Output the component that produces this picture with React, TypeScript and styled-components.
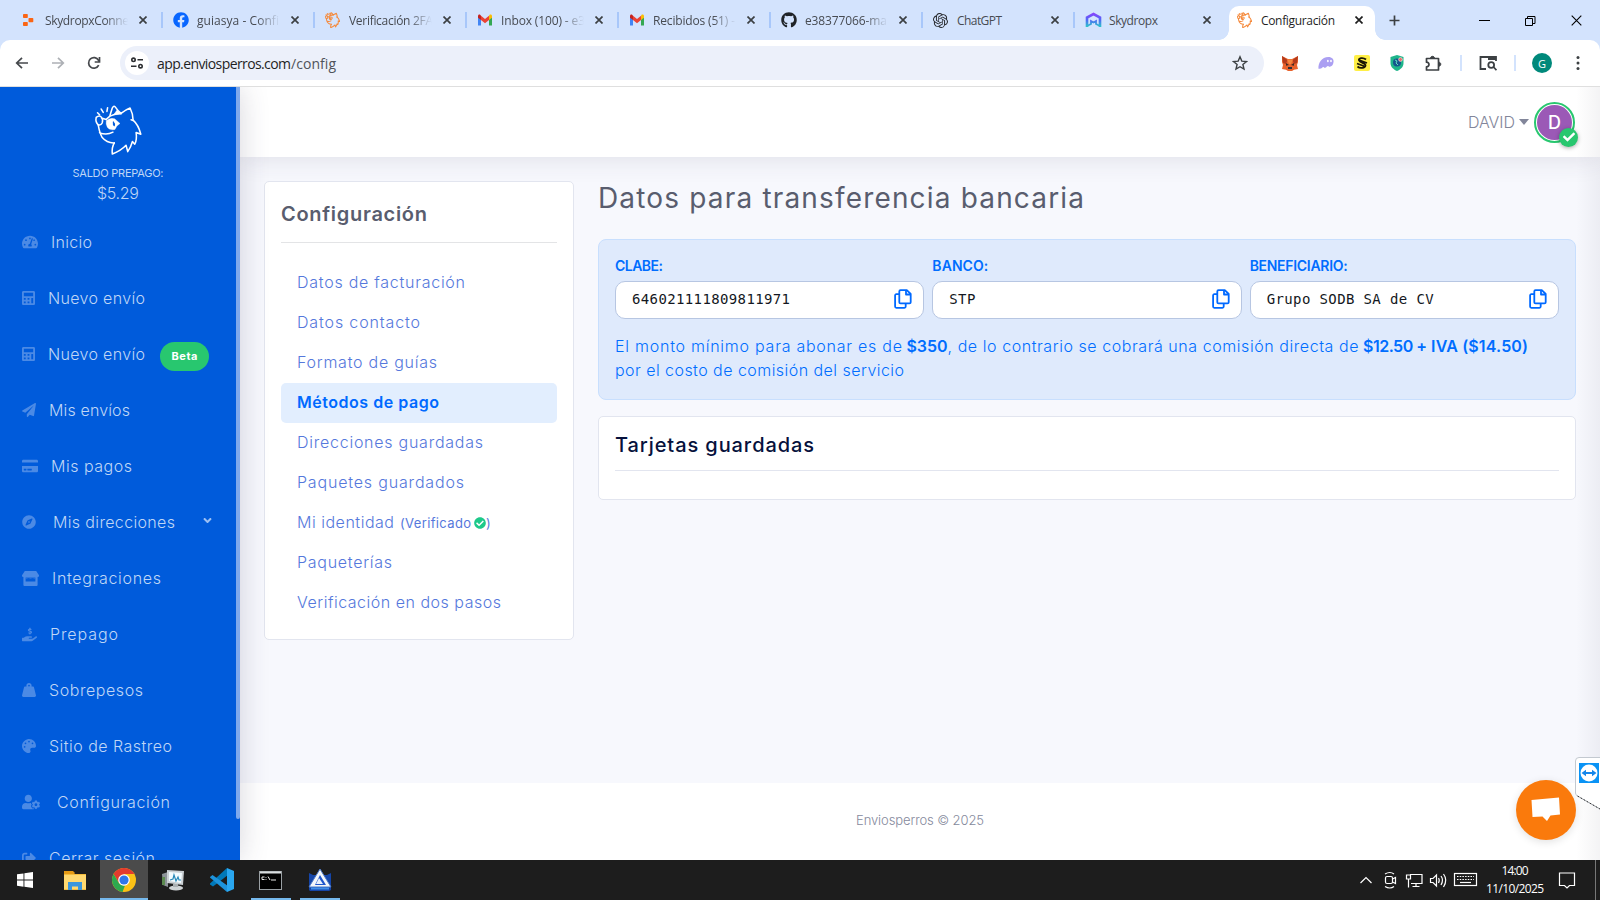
import React, { useLayoutEffect, useRef } from "react";
import styled, { createGlobalStyle, css } from "styled-components";
import {
  FaTachometerAlt, FaCalculator, FaPaperPlane, FaCreditCard, FaCompass,
  FaHandHoldingUsd, FaWeightHanging, FaPalette, FaUserCog, FaSignOutAlt, FaAngleDown,
  FaCheckCircle, FaCheck, FaFacebook, FaGithub,
} from "react-icons/fa";
import { SiOpenai } from "react-icons/si";

const GlobalStyle = createGlobalStyle`
  * { box-sizing: border-box; }
  html, body { margin: 0; padding: 0; overflow: hidden; }
  body { font-family: Inter, "Liberation Sans", sans-serif; font-weight: 300; }
  svg { display: block; flex: none; }
`;

const uiFont = `"Open Sans", "Noto Sans", sans-serif`;

/* Text tracked so that it takes up a set width */
const Run = styled.span`
  display: inline-block;
  white-space: nowrap;
`;
function Fit({ w, children }: { w: number; children: string }) {
  const ref = useRef<HTMLSpanElement>(null);
  useLayoutEffect(() => {
    const el = ref.current!;
    el.style.letterSpacing = "0px";
    const gap = (w - el.getBoundingClientRect().width) / Math.max(1, children.length - 1);
    el.style.letterSpacing = `${gap}px`;
    el.style.marginRight = `${-gap}px`;
  }, [w, children]);
  return <Run ref={ref}>{children}</Run>;
}

const Screen = styled.div`
  width: 1600px;
  height: 900px;
  display: flex;
  flex-direction: column;
  overflow: hidden;
  position: relative;
  background: #fff;
`;

/* ---------- Browser ---------- */
const TabStrip = styled.div`
  height: 40px;
  flex: none;
  display: flex;
  align-items: flex-end;
  padding-left: 10px;
  background: #d3e3fd;
  font-family: ${uiFont};
  font-weight: 400;
`;
const Tab = styled.div<{ $active?: boolean; $last?: boolean }>`
  width: ${(p) => (p.$active ? 146 : 152)}px;
  height: 34px;
  display: flex;
  align-items: center;
  padding: 0 8px 6px 11px;
  position: relative;
  color: ${(p) => (p.$active ? "#1f1f1f" : "#474b52")};
  ${(p) => !p.$active && !p.$last && css`
    &::after { content: ""; position: absolute; right: -1px; top: 6px; width: 2px; height: 16px; background: #a8c7fa; }`}
  ${(p) => p.$active && css`
    margin-left: 3px;
    padding-left: 8px;
    background: #fff;
    border-radius: 10px 10px 0 0;
    &::before, &::after { content: ""; position: absolute; bottom: 0; width: 10px; height: 10px; }
    &::before { left: -10px; background: radial-gradient(circle at 0 0, transparent 9.5px, #fff 10px); }
    &::after { right: -10px; background: radial-gradient(circle at 100% 0, transparent 9.5px, #fff 10px); }`}
`;
const TabIcon = styled.span`
  width: 17px;
  display: flex;
`;
const TabTitle = styled.span<{ $fade?: boolean }>`
  width: 83px;
  margin: 2px 0 0 7px;
  overflow: hidden;
  white-space: nowrap;
  font-size: 12px;
  line-height: 18px;
  ${(p) => p.$fade && css`mask-image: linear-gradient(90deg, #000 72%, transparent 100%);`}
`;
const TabClose = styled.span`
  margin-left: 11px;
`;
const StripButtons = styled.div`
  flex: 1;
  height: 40px;
  display: flex;
  align-items: center;
  justify-content: space-between;
  padding: 0 18px 0 14px;
`;
const WindowControls = styled.div`
  display: flex;
  gap: 35px;
`;
const BarBack = styled.div`
  background: #d3e3fd;
  flex: none;
`;
const Toolbar = styled.div`
  height: 47px;
  display: flex;
  align-items: center;
  background: #fff;
  border-radius: 10px 10px 0 0;
  border-bottom: 1px solid #dfdfdf;
  padding: 0 14px;
  font-family: ${uiFont};
  font-weight: 400;
`;
const NavIcons = styled.div`
  display: flex;
  gap: 20px;
  width: 106px;
`;
const Omnibox = styled.div`
  width: 1144px;
  height: 34px;
  border-radius: 17px;
  background: #ecf0fa;
  display: flex;
  align-items: center;
  padding: 0 16px 0 5px;
  font-size: 14px;
  color: #1f1f1f;
`;
const SiteInfo = styled.span`
  width: 24px;
  height: 24px;
  border-radius: 50%;
  background: #fff;
  display: grid;
  place-items: center;
  margin-right: 8px;
`;
const Path = styled.span`
  flex: 1;
  color: #50545b;
`;
const Extensions = styled.div`
  display: flex;
  align-items: center;
  gap: 20px;
  margin-left: 18px;
`;
const BarRule = styled.span`
  width: 2px;
  height: 16px;
  background: #d3e3fd;
  margin: 0 -3px 0 -3px;
`;
const Profile = styled.span`
  width: 20px;
  height: 20px;
  border-radius: 50%;
  background: #00897b;
  color: #fff;
  font-size: 11px;
  display: grid;
  place-items: center;
  margin: 0 4px 0 -1px;
`;

/* ---------- Page ---------- */
const Page = styled.div`
  flex: 1;
  min-height: 0;
  display: flex;
  position: relative;
  overflow: hidden;
`;
const Sidebar = styled.aside`
  width: 240px;
  flex: none;
  display: flex;
  flex-direction: column;
  align-items: center;
  background: #005bdb;
  color: #bfd6f6;
  position: relative;
  z-index: 2;
  box-shadow: 0 0 28px 0 rgba(55, 50, 80, 0.2);
`;
const SideScroll = styled.span`
  position: absolute;
  right: 0;
  top: 0;
  width: 4px;
  height: 732px;
  border-radius: 0 0 2px 2px;
  background: #7fa9ec;
`;
const LogoBox = styled.div`
  height: 69px;
  flex: none;
  padding: 17px 4px 0 0;
`;
const BalanceLabel = styled.div`
  margin: 7px 4px 0 0;
  height: 20px;
  flex: none;
  line-height: 20px;
  font-size: 11px;
  font-weight: 400;
`;
const Balance = styled.div`
  margin-right: 4px;
  height: 20px;
  flex: none;
  line-height: 20px;
  font-size: 16px;
`;
const Menu = styled.nav`
  width: 100%;
  margin-top: 11px;
`;
const MenuItem = styled.div`
  height: 56px;
  display: flex;
  align-items: center;
  padding-left: 22px;
  font-size: 16px;
  line-height: 24px;
  & > svg { color: #4b8ae5; }
`;
const MenuText = styled.span<{ $gap: number }>`
  margin-left: ${(p) => p.$gap}px;
`;
const Beta = styled.span`
  width: 49px;
  height: 29px;
  margin: 4px 0 0 15px;
  border-radius: 15px;
  background: #28c76f;
  color: #fff;
  font-size: 11px;
  font-weight: 700;
  display: grid;
  place-items: center;
`;
const Caret = styled.span`
  margin: -3px 0 0 26px;
  color: #9cc0f3;
`;
const Content = styled.div`
  flex: 1;
  display: flex;
  flex-direction: column;
  background: #f7f8fd;
`;
const Header = styled.header`
  height: 70px;
  flex: none;
  background: #fff;
  display: flex;
  justify-content: flex-end;
  align-items: center;
  padding-right: 25px;
  box-shadow: 0 0 28px 0 rgba(55, 50, 80, 0.14);
  font-size: 16px;
  color: #82869a;
`;
const DownMark = styled.span`
  border: 5px solid transparent;
  border-top: 6px solid #82869a;
  border-bottom: 0;
  margin: 0 5px 0 4px;
`;
const Avatar = styled.span`
  width: 41px;
  height: 41px;
  border-radius: 50%;
  border: 2px solid #28c76f;
  padding: 1px;
  position: relative;
`;
const AvatarFace = styled.span`
  display: grid;
  place-items: center;
  height: 100%;
  border-radius: 50%;
  background: #9b59b6;
  color: #fff;
  font-size: 18px;
  font-weight: 500;
`;
const AvatarBadge = styled.span`
  position: absolute;
  right: -5px;
  bottom: -6px;
  width: 19px;
  height: 19px;
  border-radius: 50%;
  background: #28c76f;
  color: #fff;
  display: grid;
  place-items: center;
  box-shadow: 0 1px 4px rgba(0, 0, 0, 0.35);
`;
const Columns = styled.main`
  flex: 1;
  display: flex;
  align-items: flex-start;
  gap: 24px;
  padding: 24px 24px 0 24px;
`;
const Card = styled.section`
  background: #fff;
  border: 1px solid #e2e5ef;
  border-radius: 5px;
`;
const SettingsCard = styled(Card)`
  width: 310px;
  height: 459px;
  padding: 16px;
`;
const CardTitle = styled.h3<{ $dark?: boolean }>`
  margin: 0;
  height: ${(p) => (p.$dark ? 38 : 45)}px;
  line-height: ${(p) => (p.$dark ? 25 : 32)}px;
  border-bottom: 1px solid ${(p) => (p.$dark ? "#e2e5ef" : "#e3e4e6")};
  font-size: 20px;
  font-weight: ${(p) => (p.$dark ? 500 : 600)};
  color: ${(p) => (p.$dark ? "#06113c" : "#595d6e")};
`;
const Links = styled.div`
  padding-top: 20px;
`;
const SettingsLink = styled.div<{ $active?: boolean }>`
  height: 40px;
  padding: 0 0 2px 16px;
  display: flex;
  align-items: center;
  border-radius: 5px;
  font-size: 16px;
  color: ${(p) => (p.$active ? "#0069ff" : "#5578dc")};
  font-weight: ${(p) => (p.$active ? 600 : 300)};
  background: ${(p) => (p.$active ? "#e2eefe" : "transparent")};
`;
const Verified = styled.span`
  display: inline-flex;
  align-items: center;
  margin: 2px 0 0 6px;
  font-size: 13px;
  font-weight: 400;
  & > svg { color: #1dc98a; margin-left: 3px; }
`;
const Main = styled.div`
  flex: 1;
  display: flex;
  flex-direction: column;
`;
const PageTitle = styled.h2`
  margin: 0 0 22px;
  height: 36px;
  line-height: 34px;
  font-size: 28px;
  font-weight: 400;
  color: #595d6e;
`;
const TransferBox = styled.section`
  height: 161px;
  padding: 16px;
  background: #dfeafc;
  border: 1px solid #c8dffe;
  border-radius: 8px;
  color: #006dff;
`;
const Fields = styled.div`
  display: grid;
  grid-template-columns: repeat(3, 1fr);
  gap: 8px;
`;
const FieldLabel = styled.div`
  height: 25px;
  line-height: 20px;
  font-size: 14px;
  font-weight: 600;
`;
const FieldBox = styled.div`
  height: 38px;
  display: flex;
  align-items: center;
  justify-content: space-between;
  padding: 0 11px 2px 16px;
  background: #fff;
  border: 1px solid #b7c6e2;
  border-radius: 10px;
  color: #131722;
  font: 400 14px "DejaVu Sans Mono", "Liberation Mono", monospace;
`;
const Notice = styled.p`
  margin: 15px 0 0;
  font-size: 16px;
  line-height: 24px;
  white-space: nowrap;
  b { font-weight: 600; }
`;
const SavedCards = styled(Card)`
  height: 84px;
  margin-top: 16px;
  padding: 16px;
`;
const Footer = styled.footer`
  height: 77px;
  flex: none;
  background: #fff;
  display: grid;
  place-items: center;
  padding-bottom: 3px;
  font-size: 13px;
  color: #85899c;
`;
const EdgeShade = styled.span`
  position: absolute;
  right: 0;
  top: 0;
  bottom: 0;
  width: 24px;
  background: linear-gradient(90deg, rgba(60, 55, 80, 0), rgba(60, 55, 80, 0.06));
`;
const Chat = styled.span`
  position: absolute;
  left: 1516px;
  top: 693px;
  width: 60px;
  height: 60px;
  border-radius: 50%;
  background: #fa7a0c;
  display: grid;
  place-items: center;
  box-shadow: 0 2px 8px rgba(0, 0, 0, 0.12);
`;
const Viewer = styled.span`
  position: absolute;
  left: 1575px;
  top: 670px;
`;

/* ---------- Taskbar ---------- */
const Taskbar = styled.div`
  height: 40px;
  flex: none;
  display: flex;
  justify-content: space-between;
  background: #1d1d1d;
  color: #fff;
  font-family: ${uiFont};
  font-weight: 400;
`;
const Apps = styled.div`
  display: flex;
`;
const AppButton = styled.span<{ $on?: boolean; $line?: number; $w?: number }>`
  width: ${(p) => p.$w ?? 49}px;
  height: 40px;
  display: grid;
  place-items: center;
  position: relative;
  background: ${(p) => (p.$on ? "#4b4b4b" : "transparent")};
  ${(p) => p.$line && css`&::after { content: ""; position: absolute; bottom: 0; left: calc(50% - ${p.$line / 2}px); width: ${p.$line}px; height: 2px; background: #76b9ed; }`}
`;
const Tray = styled.div`
  display: flex;
  align-items: center;
  padding-right: 4px;
`;
const TrayIcons = styled.svg`
  margin-right: -114px;
`;
const Clock = styled.div`
  width: 80px;
  margin-right: 3px;
  font-size: 12px;
  line-height: 18px;
  text-align: center;
`;
const ShowDesktop = styled.span`
  width: 1px;
  height: 40px;
  margin-left: 19px;
  background: #777;
`;

/* ---------- Drawings ---------- */
const Cross = ({ s = 8, w = 1.7, c = "#3c4043" }) => (
  <svg width={s} height={s} viewBox="0 0 8 8" stroke={c} strokeWidth={w} fill="none"><path d="M.5 .5l7 7M7.5 .5l-7 7" /></svg>
);
const Dog = ({ w, h, c, sw, bg }: { w: number; h: number; c: string; sw: number; bg: string }) => (
  <svg width={w} height={h} viewBox="18 18 142 152" fill="none" stroke={c} strokeWidth={sw} strokeLinejoin="round" strokeLinecap="round">
    <path d="M65 52L72 30Q76 22 80 26Q88 38 98 46Q112 35 125 30Q134 48 134 66Q150 80 157 108L143 103Q146 124 139 138L132 130Q127 148 118 160L113 141Q98 157 72 167Q70 147 78 134" />
    <path d="M128 65L134 67M78 134Q56 135 42 118Q34 104 30 80M34 104Q56 112 74 102" />
    <path d="M24 58Q34 49 40 58Q45 64 42 74Q37 83 30 80Q21 72 24 58ZM40 60L54 64L65 54Q82 46 98 47" />
    <path d="M76 50L86 36L98 47Z" fill={c} strokeWidth="1" />
    <path d="M54 68Q66 57 79 62L95 76Q84 82 80 94Q64 98 57 87Q52 78 54 68Z" fill={c} strokeWidth="1" />
    <path d="M75 71Q80 76 78 83Q74 80 75 71Z" fill={bg} stroke={bg} strokeWidth="3" />
    <path d="M28 44L34 50M39 33L45 43M58 29L56 40" />
  </svg>
);
const Store = () => (
  <svg width="17" height="15" viewBox="0 0 17 15" fill="currentColor">
    <path d="M2.800 0h11.400L17 4.200v.6Q17 6 15.800 6H1.200Q0 6 0 4.800v-.6z" />
    <path d="M1.400 6h2.200v4.500h9.800V6h2.200v8q0 1-1 1H2.400q-1 0-1-1z" />
    <path d="M3 6h11v1l-1.500 .8-2-.8-2 .8-2-.8-2 .8-1.500-.8z" opacity=".6" />
  </svg>
);
const Calculator = () => (
  <svg width="13" height="14" viewBox="0 0 448 512" preserveAspectRatio="none"><FaCalculator size="100%" preserveAspectRatio="none" /></svg>
);
const Gmail = () => (
  <svg width="16" height="16" viewBox="0 0 16 16">
    <path d="M1 4v9.500h3V7.200z" fill="#4285f4" /><path d="M15 4v9.500h-3V7.200z" fill="#34a853" />
    <path d="M12 3.800V8l3-2.300V4c0-1.600-1.500-2-2.400-1.200z" fill="#fbbc04" />
    <path d="M1 4v1.700L4 8V3.800L3.400 3C2.300 2 1 2.800 1 4z" fill="#c5221f" /><path d="M4 3.800L8 7l4-3.200V8l-4 3.200L4 8z" fill="#ea4335" />
  </svg>
);
const OrangeBlocks = () => (
  <svg width="16" height="16" viewBox="0 0 16 16" fill="#fb6514"><rect x="2" y="2" width="4.800" height="4" rx=".8" /><rect x="7.500" y="6" width="4.800" height="4.300" rx=".8" /><rect x="2" y="10" width="4.800" height="4" rx=".8" /></svg>
);
const Skydropx = () => (
  <svg width="17" height="16" viewBox="0 0 17 16" fill="none" strokeWidth="2.600">
    <defs><linearGradient id="sk" gradientUnits="userSpaceOnUse" x1="0" y1="1" x2="0" y2="15"><stop offset="0" stopColor="#8a3ffc" /><stop offset=".5" stopColor="#4f6bf5" /><stop offset="1" stopColor="#2bc8c8" /></linearGradient></defs>
    <path d="M2 15V5.500L8.500 2L15 5.500V15" stroke="url(#sk)" /><path d="M2 14l4-2V9l2.500 1.500L11 9v3l4 2" stroke="url(#sk)" strokeWidth="1.800" />
  </svg>
);
const Plus = () => <svg width="11" height="11" viewBox="0 0 11 11" stroke="#3c4043" strokeWidth="1.700"><path d="M5.500 .5v10M.5 5.500h10" /></svg>;
const Arrow = ({ flip, c }: { flip?: boolean; c: string }) => (
  <svg width="16" height="16" viewBox="0 0 16 16" fill="none" stroke={c} strokeWidth="1.700"><path d={flip ? "M2 8h11M8 2.800L13.300 8L8 13.200" : "M14 8H3M8 2.800L2.700 8L8 13.200"} /></svg>
);
const Reload = () => (
  <svg width="16" height="16" viewBox="0 0 16 16" fill="none" stroke="#45484c" strokeWidth="1.700"><path d="M12.700 10.200A5.300 5.300 0 1 1 12.500 5.200L13.600 6.600" /><path d="M13.500 2v5H8.700" /></svg>
);
const Tune = () => (
  <svg width="14" height="12" viewBox="0 0 14 12" fill="none" stroke="#2b2d30" strokeWidth="1.600"><circle cx="3.500" cy="2.800" r="1.700" /><path d="M7.500 2.800H13M1 9.200h5.500" /><circle cx="10.500" cy="9.200" r="1.700" /></svg>
);
const Star = () => <svg width="16" height="16" viewBox="0 0 16 16" fill="none" stroke="#3c4043" strokeWidth="1.400"><path d="M8 1.800l1.800 4.300 4.700.4-3.600 3 1.100 4.600L8 11.700l-4 2.400 1.100-4.600-3.600-3 4.700-.4z" /></svg>;
const Fox = () => (
  <svg width="16" height="16" viewBox="0 0 16 16"><path d="M0 1l6 3h4l6-3v6l-1 3 1 4-4 .8-2 1.200H6l-2-1.200L0 14l1-4-1-3z" fill="#e8622c" /><path d="M0 1l5.500 4L4 9 1 8zM16 1l-5.500 4L12 9l3-1z" fill="#b23a1c" /><path d="M4 8l3 2-3 .8zM12 8L9 10l3 .8z" fill="#3b2a25" /><path d="M6 12h4v2H6z" fill="#2c2f3a" /><path d="M5 4.500h6L9 9H7z" fill="#f58840" /></svg>
);
const Ghost = () => (
  <svg width="16" height="14" viewBox="0 0 17 14"><path d="M.5 13C0 7 4 .5 11 .5c4 0 6 2.500 5.500 5.500-.4 3-2 5-4 5-1.200 0-1.200-.8-2-.8-1 0-1.500 1.800-3 1.800-1.200 0-1.200-.8-2-.8C4.500 11.200 4 13.700.5 13z" fill="#ab9ff2" /><ellipse cx="10.500" cy="4.800" rx=".9" ry="1.300" fill="#fff" /><ellipse cx="13.800" cy="4.800" rx=".9" ry="1.300" fill="#fff" /></svg>
);
const Solflare = () => (
  <svg width="16" height="16" viewBox="0 0 16 16"><rect width="16" height="16" rx="2" fill="#ffef46" /><path d="M12 4.500C9 2 4 3 5 5.500S12 8 11.500 10.500 6 14 3.500 11.500M3 8.500l8 3M5 5l8 3" fill="none" stroke="#1a1605" strokeWidth="1.800" /></svg>
);
const Shield = () => (
  <svg width="14" height="16" viewBox="0 0 14 16"><path d="M7 0l6.500 2v6c0 4-3 6.500-6.500 8C3.500 14.500.5 12 .5 8V2z" fill="#1fb58a" /><circle cx="7" cy="7.500" r="4" fill="#15548c" /><path d="M5 5l2 1-1 2 2 2" stroke="#5fe0c0" fill="none" /><circle cx="10.500" cy="4.500" r="1.900" fill="#e86a6a" stroke="#fff" strokeWidth=".5" /></svg>
);
const Puzzle = () => <svg width="19" height="17" viewBox="-1 0 19 17" fill="none" stroke="#3c4043" strokeWidth="1.700"><path d="M1.500 3.500h12V15H1.500v-3.200c3.300 0 3.300-4.600 0-4.600z" strokeLinejoin="round" /><path d="M5.500 3.200c0-2.500 4-2.500 4 0M13.800 7.200c2.600 0 2.600 4 0 4" fill="#3c4043" strokeWidth="1" /></svg>;
const TabSearch = () => <svg width="18" height="16" viewBox="0 0 18 16" fill="none" stroke="#3c4043" strokeWidth="1.800"><path d="M7 14H1.500V2H17v4" /><path d="M9 3.500h8" strokeWidth="3" /><circle cx="12.200" cy="10" r="2.900" /><path d="M14.500 12l3 3.200" /></svg>;
const Dots = () => <svg width="4" height="16" viewBox="0 0 4 16" fill="#3c4043"><circle cx="2" cy="2.500" r="1.500" /><circle cx="2" cy="8" r="1.500" /><circle cx="2" cy="13.500" r="1.500" /></svg>;
const Copy = () => (
  <svg width="18" height="20" viewBox="0 0 18 20" fill="none" stroke="#0069ff" strokeWidth="1.800" strokeLinejoin="round"><path d="M6.500 1.200h6.300L16.700 5v8.200c0 .7-.5 1.200-1.200 1.200h-9c-.7 0-1.200-.5-1.200-1.200V2.400c0-.7.500-1.200 1.200-1.200z" /><path d="M12 1.500V5.500h4.500M5 5.200H2.300C1.600 5.200 1.100 5.700 1.100 6.400v11.200c0 .7.500 1.200 1.200 1.200h8.200c.7 0 1.200-.5 1.200-1.200V14.500" /></svg>
);

const tabs = [
  { icon: <OrangeBlocks />, title: "SkydropxConne", w: 84, fade: true },
  { icon: <FaFacebook size={16} color="#0866ff" />, title: "guiasya - Confi", w: 82, fade: true },
  { icon: <Dog w={15} h={16} c="#f58a3c" sw={10} bg="#d3e3fd" />, title: "Verificación 2FA", w: 84, fade: true },
  { icon: <Gmail />, title: "Inbox (100) - e3", w: 84, fade: true },
  { icon: <Gmail />, title: "Recibidos (51) -", w: 82, fade: true },
  { icon: <FaGithub size={16} color="#1f2328" />, title: "e38377066-ma", w: 82, fade: true },
  { icon: <SiOpenai size={15} color="#26282c" />, title: "ChatGPT", w: 45 },
  { icon: <Skydropx />, title: "Skydropx", w: 49 },
];

const menu: { Icon: any; s: number; text: string; x: number; w: number }[] = [
  { Icon: FaTachometerAlt, s: 16, text: "Inicio", x: 51, w: 41 },
  { Icon: Calculator, s: 13, text: "Nuevo envío", x: 48, w: 97 },
  { Icon: Calculator, s: 13, text: "Nuevo envío", x: 48, w: 97 },
  { Icon: FaPaperPlane, s: 14, text: "Mis envíos", x: 49, w: 81 },
  { Icon: FaCreditCard, s: 16, text: "Mis pagos", x: 51, w: 81 },
  { Icon: FaCompass, s: 14, text: "Mis direcciones", x: 53, w: 122 },
  { Icon: Store, s: 17, text: "Integraciones", x: 52, w: 109 },
  { Icon: FaHandHoldingUsd, s: 15, text: "Prepago", x: 50, w: 68 },
  { Icon: FaWeightHanging, s: 14, text: "Sobrepesos", x: 49, w: 94 },
  { Icon: FaPalette, s: 14, text: "Sitio de Rastreo", x: 49, w: 123 },
  { Icon: FaUserCog, s: 18, text: "Configuración", x: 57, w: 113 },
  { Icon: FaSignOutAlt, s: 14, text: "Cerrar sesión", x: 49, w: 106 },
];

const links: [string, number][] = [
  ["Datos de facturación", 168],
  ["Datos contacto", 123],
  ["Formato de guías", 140],
  ["Métodos de pago", 142],
  ["Direcciones guardadas", 186],
  ["Paquetes guardados", 167],
  ["Mi identidad", 97],
  ["Paqueterías", 95],
  ["Verificación en dos pasos", 204],
];

const fields: [string, number, string, number][] = [
  ["CLABE:", 48, "646021111809811971", 158],
  ["BANCO:", 56, "STP", 26],
  ["BENEFICIARIO:", 98, "Grupo SODB SA de CV", 167],
];

function Browser() {
  return (
    <>
      <TabStrip>
        {tabs.map((t, i) => (
          <Tab key={t.title} $last={i === tabs.length - 1}>
            <TabIcon>{t.icon}</TabIcon>
            <TabTitle $fade={t.fade}><Fit w={t.w}>{t.title}</Fit></TabTitle>
            <TabClose><Cross /></TabClose>
          </Tab>
        ))}
        <Tab $active>
          <TabIcon><Dog w={15} h={16} c="#f58a3c" sw={10} bg="#fff" /></TabIcon>
          <TabTitle><Fit w={74}>Configuración</Fit></TabTitle>
          <TabClose><Cross c="#1f1f1f" /></TabClose>
        </Tab>
        <StripButtons>
          <Plus />
          <WindowControls>
            <svg width="11" height="11" viewBox="0 0 11 11"><path d="M0 5.500h11" stroke="#000" /></svg>
            <svg width="11" height="11" viewBox="0 0 11 11" fill="none" stroke="#000"><path d="M.5 3.500h7v7h-7zM2.500 3.500v-2h7.500v7H8" /></svg>
            <Cross s={11} w={0.8} c="#000" />
          </WindowControls>
        </StripButtons>
      </TabStrip>
      <BarBack>
        <Toolbar>
          <NavIcons><Arrow c="#45484c" /><Arrow flip c="#adb0b5" /><Reload /></NavIcons>
          <Omnibox>
            <SiteInfo><Tune /></SiteInfo>
            <Fit w={134}>app.enviosperros.com</Fit>
            <Path><Fit w={45}>/config</Fit></Path>
            <Star />
          </Omnibox>
          <Extensions>
            <Fox /><Ghost /><Solflare /><Shield /><Puzzle /><BarRule /><TabSearch /><BarRule />
            <Profile>G</Profile><Dots />
          </Extensions>
        </Toolbar>
      </BarBack>
    </>
  );
}

function Side() {
  return (
    <Sidebar>
      <LogoBox><Dog w={48} h={51} c="#fff" sw={4.6} bg="#005bdb" /></LogoBox>
      <BalanceLabel><Fit w={91}>SALDO PREPAGO:</Fit></BalanceLabel>
      <Balance><Fit w={42}>$5.29</Fit></Balance>
      <Menu>
        {menu.map(({ Icon, s, text, x, w }, i) => (
          <MenuItem key={i}>
            <Icon size={s} />
            <MenuText $gap={x - 22 - s}><Fit w={w}>{text}</Fit></MenuText>
            {i === 2 && <Beta><Fit w={26}>Beta</Fit></Beta>}
            {i === 5 && <Caret><FaAngleDown size={13} /></Caret>}
          </MenuItem>
        ))}
      </Menu>
      <SideScroll />
    </Sidebar>
  );
}

function Settings() {
  return (
    <SettingsCard>
      <CardTitle><Fit w={146}>Configuración</Fit></CardTitle>
      <Links>
        {links.map(([text, w], i) => (
          <SettingsLink key={text} $active={i === 3}>
            <Fit w={w}>{text}</Fit>
            {i === 6 && <Verified><Fit w={71}>(Verificado</Fit><FaCheckCircle size={12} /><span>)</span></Verified>}
          </SettingsLink>
        ))}
      </Links>
    </SettingsCard>
  );
}

function Transfer() {
  return (
    <Main>
      <PageTitle><Fit w={486}>Datos para transferencia bancaria</Fit></PageTitle>
      <TransferBox>
        <Fields>
          {fields.map(([label, lw, value, vw]) => (
            <div key={label}>
              <FieldLabel><Fit w={lw}>{label}</Fit></FieldLabel>
              <FieldBox><Fit w={vw}>{value}</Fit><Copy /></FieldBox>
            </div>
          ))}
        </Fields>
        <Notice>
          <Fit w={287}>El monto mínimo para abonar es de</Fit>{" "}
          <b><Fit w={41}>$350</Fit></b>
          <Fit w={411}>, de lo contrario se cobrará una comisión directa de</Fit>{" "}
          <b><Fit w={64}>$12.50 +</Fit> <Fit w={97}>IVA ($14.50)</Fit></b>
          <br />
          <Fit w={289}>por el costo de comisión del servicio</Fit>
        </Notice>
      </TransferBox>
      <SavedCards>
        <CardTitle $dark><Fit w={199}>Tarjetas guardadas</Fit></CardTitle>
      </SavedCards>
    </Main>
  );
}

function Desk() {
  return (
    <Taskbar>
      <Apps>
        <AppButton><svg width="16" height="16" viewBox="0 0 16 16" fill="#fff"><path d="M0 2.300L6.500 1.400V7.600H0zM7.400 1.300L16 0V7.600H7.400zM0 8.500h6.500v6.200L0 13.800zM7.400 8.500H16V16l-8.600-1.200z" /></svg></AppButton>
        <AppButton $w={51}><svg width="22" height="19" viewBox="0 0 22 19"><path d="M0 1h9l1.500 2H22v16H0z" fill="#f5bd3d" /><path d="M0 4h22v14H0z" fill="#ffd970" /><path d="M0 0h9l2 2-1 1H0z" fill="#e59a14" /><path d="M4 11h14v8h-4v-3.500H8V19H4z" fill="#3a96dd" /></svg></AppButton>
        <AppButton $on $w={48} $line={48}>
          <svg width="24" height="24" viewBox="0 0 24 24"><circle cx="12" cy="12" r="12" fill="#fbc116" /><path d="M1.600 6A12 12 0 0 1 22.400 6H12L7 15z" fill="#e33b2e" /><path d="M1.600 6L6.900 15Q9 18 13 17.500L10.500 23.900A12 12 0 0 1 1.600 6z" fill="#2da94f" /><circle cx="12" cy="12" r="5.800" fill="#fff" /><circle cx="12" cy="12" r="4.600" fill="#2f76ea" /></svg>
        </AppButton>
        <AppButton><svg width="24" height="22" viewBox="0 0 24 22"><path d="M1 5l6-2v15l-5-2z" fill="#8d9499" /><path d="M1 8h3v8H1z" fill="#5c8a50" /><path d="M6 1l17 1-1 14-16-2z" fill="#c9cfd3" /><path d="M8 3l13 1-1 10-12-2z" fill="#f2fbff" /><path d="M9 11l3-1 1-4 2 6 2-4 1 3h2" stroke="#2688b8" fill="none" strokeWidth="1.200" /><ellipse cx="15" cy="19" rx="7" ry="2.500" fill="#cfd4d6" /><path d="M12 15h5v3h-5z" fill="#aab0b3" /></svg></AppButton>
        <AppButton><svg width="24" height="24" viewBox="0 0 24 24"><path d="M17 0l1 7L3 18.500 0 16.500v-1z" fill="#0078b8" /><path d="M0 9l2.500-2L18 18l-1 6L0 9.500z" fill="#1d93dc" /><path d="M17 0l7 3v18l-7 3z" fill="#2aa7f0" /></svg></AppButton>
        <AppButton $line={40}><svg width="23" height="19" viewBox="0 0 23 19"><rect x=".5" y=".5" width="22" height="18" fill="#000" stroke="#9aa0a4" /><path d="M1 1.500h21" stroke="#d8dcde" strokeWidth="2" /><path d="M3 6h2.500M3 8.500h2.500M3 6v2.500M7 6v.8M7 8v.8M9 5.500l2 3.500M12 9h5" stroke="#e8e8e8" fill="none" /></svg></AppButton>
        <AppButton $line={40}><svg width="24" height="24" viewBox="0 0 24 24"><path d="M1 5l4 2h14l4-2v17l-2 1H2l-1-1z" fill="#1545a8" /><path d="M12 1L23 19H1z" fill="#f3f6fa" stroke="#4b78c8" /><path d="M12 7l6 10H7z" fill="#1f56cc" /><path d="M11 10l4 6H8z" fill="#e9f0fb" /><path d="M3 20.500h18" stroke="#3f8de8" strokeWidth="2" /></svg></AppButton>
      </Apps>
      <Tray>
        <TrayIcons width="232" height="24" viewBox="1358 868 232 24" fill="none" stroke="#fff" strokeWidth="1.200">
          <path d="M1361.500 883l5.500-5.500 5.500 5.500" />
          <rect x="1386.500" y="876.500" width="7" height="7" rx="1.500" /><path d="M1393.500 879l3-1.500v6l-3-1.500M1386 874q5-3 9 0M1386 886.500q5 3 9 0" />
          <path d="M1411 874.500h12v9h-11M1417 883.500v3M1413.500 886.500h7M1407.500 875h4v4h-4zM1409.500 879v8.500" />
          <path d="M1431.500 878.500h2.500l3.500-3.500v11l-3.500-3.500h-2.500zM1439.500 878q1.500 2 0 5M1442 876q3 4 0 9M1444.500 874q4.500 6 0 13" />
          <rect x="1455.500" y="873.500" width="22" height="12" /><path d="M1458 876.500h17M1458 879.500h17" strokeDasharray="1.500 1.200" /><path d="M1461 882.500h11" />
        </TrayIcons>
        <Clock><Fit w={27}>14:00</Fit><br /><Fit w={58}>11/10/2025</Fit></Clock>
        <svg width="18" height="18" viewBox="0 0 18 18" fill="none" stroke="#fff" strokeWidth="1.200"><path d="M1.500 2h15v12.500h-5L9 17l-2.500-2.500h-5z" /></svg>
        <ShowDesktop />
      </Tray>
    </Taskbar>
  );
}

export default function App() {
  return (
    <Screen>
      <GlobalStyle />
      <Browser />
      <Page>
        <Side />
        <Content>
          <Header>
            <Fit w={47}>DAVID</Fit>
            <DownMark />
            <Avatar>
              <AvatarFace>D</AvatarFace>
              <AvatarBadge><FaCheck size={12} /></AvatarBadge>
            </Avatar>
          </Header>
          <Columns><Settings /><Transfer /></Columns>
          <Footer><Fit w={128}>Enviosperros © 2025</Fit></Footer>
        </Content>
        <EdgeShade />
        <Chat>
          <svg width="30" height="26" viewBox="0 0 30 26" fill="#fff"><path d="M.5 3L28 .5l1 17-9.500 1L16 24l-4.500-4.500L1.500 20z" /></svg>
        </Chat>
        <Viewer>
          <svg width="25" height="53" viewBox="0 0 25 53"><path d="M25 .5H4Q.5 .5.5 4v32q0 2 2 3L25 52" fill="#fff" stroke="#c3c9d0" /><path d="M2.500 39L25 52" stroke="#333" strokeDasharray="2 1.500" /><rect x="4" y="6" width="20" height="20" fill="#0a93f5" /><circle cx="14" cy="16" r="8.500" fill="#fff" /><path d="M6.500 16l4.500-3.200v2.200h6v-2.200l4.500 3.200-4.500 3.200V17h-6v2.200z" fill="#1486ea" /></svg>
        </Viewer>
      </Page>
      <Desk />
    </Screen>
  );
}
